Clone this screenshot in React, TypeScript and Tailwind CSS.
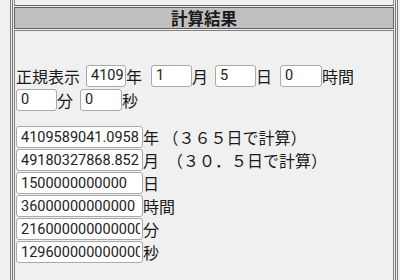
const jp = { fontFamily: '"Noto Sans CJK JP", "Noto Sans", sans-serif' };

function Box({ value, w }: { value: string; w: string }) {
  return (
    <input
      readOnly
      value={value}
      className={`${w} h-[22px] bg-white border border-[#a8a8a8] rounded-[3px] pl-[4px] pr-[2px] text-[14.5px] text-[#222] outline-none`}
      style={{ fontFamily: 'Roboto, "Noto Sans", sans-serif' }}
    />
  );
}

const results = [
  { v: "4109589041.0958", unit: "年", note: " （３６５日で計算）" },
  { v: "49180327868.852", unit: "月", note: "　（３０．５日で計算）" },
  { v: "1500000000000", unit: "日", note: "" },
  { v: "36000000000000", unit: "時間", note: "" },
  { v: "2160000000000000", unit: "分", note: "" },
  { v: "129600000000000000", unit: "秒", note: "" },
];

export default function App() {
  return (
    <div className="w-[400px] h-[280px] overflow-hidden bg-[#f0f0f0] text-[#1a1a1a]" style={jp}>
      <div className="ml-[10px] mr-[2px] h-full border-x-[3px] border-double border-[#777] px-px">
        <div className="h-[6px] border-b border-[#666] border-x border-x-[#888]" />
        <div className="mt-px h-[22px] bg-[#c0c0c0] border border-[#606060] flex items-center justify-center text-[16.5px] font-bold leading-none">
          計算結果
        </div>
        <div className="mt-px h-[260px] border border-[#808080] pl-px pt-[33px] text-[16px] leading-none">
          <div className="flex items-center h-[23px]">
            <span>正規表示</span>
            <span className="ml-[6px]"><Box value="4109" w="w-[40px]" /></span>
            <span>年</span>
            <span className="ml-[9px]"><Box value="1" w="w-[41px]" /></span>
            <span>月</span>
            <span className="ml-[7px]"><Box value="5" w="w-[41px]" /></span>
            <span>日</span>
            <span className="ml-[8px]"><Box value="0" w="w-[42px]" /></span>
            <span>時間</span>
          </div>
          <div className="flex items-center h-[23px] mt-px">
            <Box value="0" w="w-[41px]" />
            <span>分</span>
            <span className="ml-[7px]"><Box value="0" w="w-[42px]" /></span>
            <span>秒</span>
          </div>
          <div className="mt-[15px] flex flex-col gap-px">
            {results.map((r) => (
              <div key={r.unit} className="flex items-center h-[22px]">
                <Box value={r.v} w="w-[127px]" />
                <span className="whitespace-pre">{r.unit}{r.note}</span>
              </div>
            ))}
          </div>
        </div>
      </div>
    </div>
  );
}
